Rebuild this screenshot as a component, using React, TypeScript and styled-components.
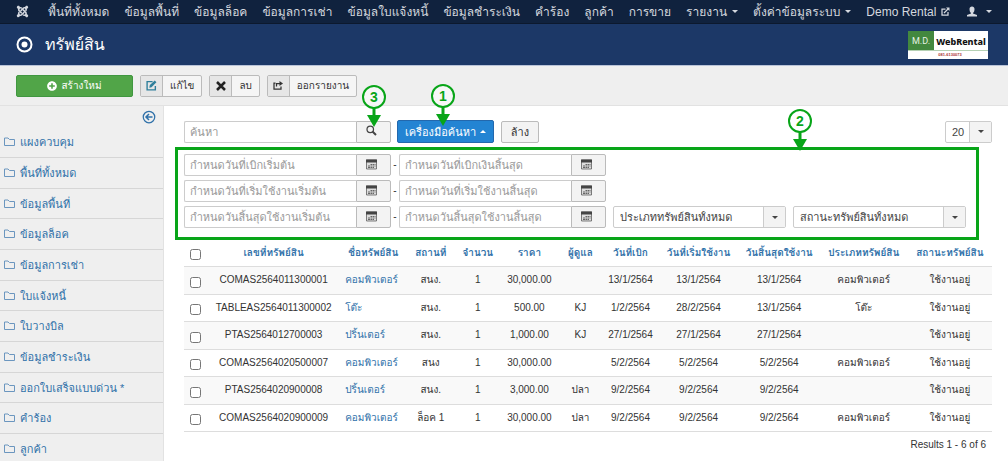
import React from "react";
import styled, { createGlobalStyle } from "styled-components";
import { FaJoomla, FaPlusCircle } from "react-icons/fa";

const GlobalStyle = createGlobalStyle`
  *, *::before, *::after { box-sizing: border-box; }
  body { margin: 0; background: #fff; color: #333; }
  body, button, input, select { font-family: "Liberation Sans", "Loma", "Waree", "Noto Sans Thai", sans-serif; }
  body { font-size: 10px; line-height: 16px; }
  a { color: #3071a9; text-decoration: none; }
  svg { display: block; flex: none; }
`;

const Page = styled.div`
  min-height: 100vh;
  display: flex;
  flex-direction: column;
`;

const NavBar = styled.nav`
  height: 24px;
  padding: 0 16px;
  display: flex;
  align-items: center;
  gap: 15px;
  background: #10223e;
  border-bottom: 1px solid #0c192e;
  font-size: 12px;
  white-space: nowrap;
`;

const NavLogo = styled.span`
  margin-right: 4px;
`;

const NavLink = styled.a<{ $end?: boolean }>`
  display: flex;
  align-items: center;
  gap: ${(p) => (p.$end ? "9px" : "5px")};
  margin-left: ${(p) => (p.$end ? "auto" : "0")};
  color: #d4d8df;
`;

const Caret = styled.span<{ $up?: boolean }>`
  display: block;
  border: 3px solid transparent;
  ${(p) => (p.$up ? "border-bottom-color: currentColor; border-top: 0;" : "border-top-color: currentColor; border-bottom: 0;")}
`;

const TitleBar = styled.header`
  height: 42px;
  padding: 0 20px 0 16px;
  display: flex;
  align-items: center;
  gap: 12px;
  background: #1c3867;
  border-bottom: 1px solid #b9c3d8;
  color: #fff;
`;

const Title = styled.h1`
  margin: 0;
  flex: 1;
  font-size: 16px;
  line-height: 24px;
  font-weight: 400;
`;

const Brand = styled.div`
  width: 80px;
  height: 28px;
  display: grid;
  grid-template: 19px 9px / 26px 54px;
  background: #fff;
`;

const BrandMark = styled.span`
  background: #43883f;
  color: #e6f2e5;
  font: 9px/20px Roboto, sans-serif;
  text-align: center;
`;

const BrandName = styled.span`
  padding-top: 2px;
  color: #111;
  font: 800 9px/17px "Noto Sans", sans-serif;
  text-align: center;
`;

const BrandPhone = styled.span`
  grid-column: 1 / -1;
  border-top: 1px solid #b5d1b4;
  color: #a33;
  font: 700 4px/8px "Liberation Sans", sans-serif;
  text-align: center;
  padding-left: 4px;
`;

const Toolbar = styled.div`
  height: 40px;
  padding: 0 16px;
  display: flex;
  align-items: center;
  gap: 7px;
  background: #efefef;
  border-bottom: 1px solid #e2e2e2;
`;

const CreateButton = styled.button`
  width: 117px;
  height: 22px;
  padding: 0;
  display: flex;
  align-items: center;
  justify-content: center;
  gap: 4px;
  border: 1px solid #409740;
  border-radius: 2px;
  background: #51a548;
  color: #fff;
  font-size: 10px;
`;

const ToolButton = styled.button`
  height: 22px;
  padding: 0;
  display: flex;
  align-items: stretch;
  border: 1px solid #bbb;
  border-radius: 2px;
  background: #f5f5f5;
  color: #333;
  font-size: 10px;
  line-height: 20px;
`;

const ToolIcon = styled.span`
  width: 22px;
  display: flex;
  align-items: center;
  justify-content: center;
  border-right: 1px solid #bbb;
  background: #e6e6e6;
`;

const ToolLabel = styled.span`
  padding: 0 7px;
`;

const Body = styled.div`
  flex: 1;
  display: flex;
  align-items: stretch;
`;

const Sidebar = styled.aside`
  width: 164px;
  flex: none;
  background: #efefef;
  border-right: 1px solid #e2e2e2;
`;

const Collapse = styled.button`
  display: block;
  margin: 4px 7px 0 auto;
  padding: 0;
  border: 0;
  background: none;
  color: #3071a9;
`;

const Menu = styled.ul`
  margin: 3px 0 0;
  padding: 0;
  list-style: none;
`;

const MenuItem = styled.li`
  height: 31px;
  padding: 7px 4px 0;
  border-bottom: 1px solid #d6d6d6;
  font-size: 11px;
  &:nth-child(3n) { height: 30px; }
  &:last-child { height: 26px; border: 0; }
`;

const MenuLink = styled.a`
  display: flex;
  align-items: center;
  gap: 5px;
`;

const Main = styled.main`
  flex: 1;
  min-width: 0;
  padding: 14px 16px 0 20px;
`;

const SearchRow = styled.div`
  display: flex;
  align-items: center;
`;

const InputGroup = styled.div`
  width: 207px;
  height: 22px;
  display: flex;
`;

const TextInput = styled.input`
  flex: 1;
  min-width: 0;
  padding: 0 5px;
  border: 1px solid #ccc;
  border-right: 0;
  border-radius: 2px 0 0 2px;
  font-size: 11px;
  color: #555;
  background: #fff;
  &::placeholder { color: #999; opacity: 1; }
`;

const AddOn = styled.button`
  width: 35px;
  padding: 0 4px 2px 0;
  position: relative;
  display: flex;
  align-items: center;
  justify-content: center;
  border: 1px solid #bbb;
  border-radius: 0 2px 2px 0;
  background: #f3f3f3;
  color: #444;
`;

const SearchTools = styled.button`
  width: 97px;
  height: 23px;
  margin-left: 6px;
  padding: 0;
  position: relative;
  display: flex;
  align-items: center;
  justify-content: center;
  gap: 4px;
  border: 1px solid #2368ad;
  border-radius: 2px;
  background: #2384d3;
  color: #fff;
  font-size: 11px;
`;

const ClearButton = styled.button`
  width: 38px;
  height: 22px;
  margin-left: 7px;
  padding: 0;
  border: 1px solid #bbb;
  border-radius: 2px;
  background: #f3f3f3;
  color: #333;
  font-size: 11px;
`;

const SelectBox = styled.div<{ $width: number; $end?: boolean }>`
  width: ${(p) => p.$width}px;
  height: 22px;
  margin-left: ${(p) => (p.$end ? "auto" : "7px")};
  display: grid;
  grid-template-columns: 1fr 22px;
  border: 1px solid #ccc;
  border-radius: 2px;
  background: #fff;
  color: #444;
`;

const Select = styled.select`
  grid-area: 1 / 1 / 2 / 3;
  min-width: 0;
  padding: 0 22px 0 6px;
  appearance: none;
  border: 0;
  background: none;
  color: inherit;
  font-size: 11px;
`;

const SelectArrow = styled.span`
  grid-area: 1 / 2 / 2 / 3;
  display: flex;
  align-items: center;
  justify-content: center;
  border-left: 1px solid #ccc;
  background: #f3f3f3;
  pointer-events: none;
`;

const FilterPanel = styled.section`
  position: relative;
  margin: 4px 13px 0 -9px;
  padding: 4px 6px 9px;
  display: flex;
  flex-direction: column;
  gap: 4px;
  border: 3px solid #08a518;
`;

const FilterRow = styled.div`
  display: flex;
  align-items: center;
`;

const Dash = styled.span`
  width: 8px;
  text-align: center;
`;

const Pin = styled.span<{ $left: string; $top: number }>`
  position: absolute;
  left: ${(p) => p.$left};
  top: ${(p) => p.$top}px;
  width: 26px;
  height: 44px;
  margin-left: -13px;
  pointer-events: none;
`;

const Table = styled.table`
  width: 100%;
  table-layout: fixed;
  border-collapse: collapse;
  text-align: center;
  white-space: nowrap;
`;

const Col = styled.col<{ $width: number }>`
  width: ${(p) => p.$width}px;
`;

const HeadCell = styled.th`
  height: 26px;
  padding: 0;
  border-bottom: 1px solid #ddd;
  font-size: 10px;
`;

const Row = styled.tr`
  height: 27px;
  &:nth-child(odd) { height: 28px; background: #f9f9f9; }
`;

const Cell = styled.td<{ $left?: boolean }>`
  padding: 0 0 0 ${(p) => (p.$left ? "5px" : "0")};
  border-bottom: 1px solid #ddd;
  text-align: ${(p) => (p.$left ? "left" : "center")};
`;

const Check = styled.input`
  display: block;
  width: 11px;
  height: 11px;
  margin: 4px auto 0;
`;

const Results = styled.p`
  margin: 5px 6px 0;
  text-align: right;
`;

const TargetIcon = () => (
  <svg width="17" height="17" viewBox="0 0 17 17">
    <circle cx="8.500" cy="8.500" r="7" fill="none" stroke="#fff" strokeWidth="2" />
    <circle cx="8.500" cy="8.500" r="3" fill="#fff" />
  </svg>
);

const ExternalIcon = () => (
  <svg width="9" height="9" viewBox="0 0 18 18" fill="none" stroke="currentColor" strokeWidth="2.500">
    <path d="M9 4H2v12h12v-6M6 12l9-9" />
    <path d="M10 1h7v7z" fill="currentColor" stroke="none" />
  </svg>
);

const UserIcon = () => (
  <svg width="10" height="11" viewBox="0 0 20 22" fill="currentColor">
    <path d="M10 1c-3 0-5 2-5 5 0 4 1 6 3 8v1l-8 3v3h20v-3l-8-3v-1c2-2 3-4 3-8 0-3-2-5-5-5z" />
  </svg>
);

const EditIcon = () => (
  <svg width="11" height="11" viewBox="0 0 20 20" fill="none" stroke="#2f7f9b" strokeWidth="2.500">
    <path d="M12 3H2v15h15v-7" />
    <path d="M6 14l1-5 9-8 3 3-9 9z" fill="#2f7f9b" stroke="none" />
  </svg>
);

const CrossIcon = () => (
  <svg width="10" height="10" viewBox="0 0 20 20" stroke="#222" strokeWidth="5">
    <path d="M2 2l16 16M18 2L2 18" />
  </svg>
);

const ShareIcon = () => (
  <svg width="10" height="9" viewBox="0 0 20 18" fill="none" stroke="#333" strokeWidth="2.500">
    <path d="M5 4H2v12h14v-5" />
    <path d="M7 11V5h7" />
    <path d="M13 0l7 5-7 5z" fill="#333" stroke="none" />
  </svg>
);

const BackIcon = () => (
  <svg width="14" height="14" viewBox="0 0 28 28" fill="none" stroke="currentColor" strokeWidth="2.500">
    <circle cx="14" cy="14" r="11.500" />
    <path d="M21 14H8M14 8l-6 6 6 6" strokeWidth="3" />
  </svg>
);

const FolderIcon = () => (
  <svg width="11" height="10" viewBox="0 0 22 20" fill="none" stroke="#6b96bf" strokeWidth="2">
    <path d="M1 17V2h7l3 3h10v12z" />
  </svg>
);

const SearchIcon = () => (
  <svg width="11" height="11" viewBox="0 0 22 22" fill="none" stroke="currentColor">
    <circle cx="8.500" cy="8.500" r="6.500" strokeWidth="2.500" />
    <path d="M13 13l7 7" strokeWidth="4" />
  </svg>
);

const CalendarIcon = () => (
  <svg width="11" height="11" viewBox="0 0 22 22">
    <path d="M1 2h20v18H1z" fill="#ddd" stroke="#555" strokeWidth="1.500" />
    <path d="M0 1h22v6H0z" fill="#444" />
    <path d="M9 10h3v2H9zM13 10h3v2h-3zM17 10h2v2h-2zM4 13h4v2H4zM9 13h3v2H9zM13 13h3v2h-3zM17 13h2v2h-2zM4 16h4v2H4zM9 16h3v2H9zM13 16h3v2h-3z" fill="#666" />
  </svg>
);

const Marker = ({ n, left, top }: { n: number; left: string; top: number }) => (
  <Pin $left={left} $top={top} aria-hidden="true">
    <svg width="26" height="44" viewBox="0 0 26 44">
      <circle cx="13" cy="13" r="11" fill="#fff" fillOpacity="0.500" stroke="#08a518" strokeWidth="2" />
      <path d="M13 24v8" stroke="#08a518" strokeWidth="3" />
      <path d="M6 31h14l-7 12z" fill="#08a518" />
      <text x="13" y="18" textAnchor="middle" fontSize="14" fontWeight="700" fill="#08a518">{n}</text>
    </svg>
  </Pin>
);

const navItems = ["พื้นที่ทั้งหมด", "ข้อมูลพื้นที่", "ข้อมูลล็อค", "ข้อมูลการเช่า", "ข้อมูลใบแจ้งหนี้", "ข้อมูลชำระเงิน", "คำร้อง", "ลูกค้า", "การขาย"];
const menuItems = ["แผงควบคุม", "พื้นที่ทั้งหมด", "ข้อมูลพื้นที่", "ข้อมูลล็อค", "ข้อมูลการเช่า", "ใบแจ้งหนี้", "ใบวางบิล", "ข้อมูลชำระเงิน", "ออกใบเสร็จแบบด่วน *", "คำร้อง", "ลูกค้า"];
const dateFilters = [
  ["กำหนดวันที่เบิกเริ่มต้น", "กำหนดวันที่เบิกเงินสิ้นสุด"],
  ["กำหนดวันที่เริ่มใช้งานเริ่มต้น", "กำหนดวันที่เริ่มใช้งานสิ้นสุด"],
  ["กำหนดวันสิ้นสุดใช้งานเริ่มต้น", "กำหนดวันสิ้นสุดใช้งานสิ้นสุด"],
];
const columnWidths = [23, 133, 66, 49, 45, 58, 44, 56, 80, 81, 88, 84];
const headings = ["เลขที่ทรัพย์สิน", "ชื่อทรัพย์สิน", "สถานที่", "จำนวน", "ราคา", "ผู้ดูแล", "วันที่เบิก", "วันที่เริ่มใช้งาน", "วันสิ้นสุดใช้งาน", "ประเภททรัพย์สิน", "สถานะทรัพย์สิน"];
const assets = [
  ["COMAS2564011300001", "คอมพิวเตอร์", "สนง.", "1", "30,000.00", "", "13/1/2564", "13/1/2564", "13/1/2564", "คอมพิวเตอร์", "ใช้งานอยู่"],
  ["TABLEAS2564011300002", "โต๊ะ", "สนง.", "1", "500.00", "KJ", "1/2/2564", "28/2/2564", "13/1/2564", "โต๊ะ", "ใช้งานอยู่"],
  ["PTAS2564012700003", "ปริ้นเตอร์", "สนง.", "1", "1,000.00", "KJ", "27/1/2564", "27/1/2564", "27/1/2564", "", "ใช้งานอยู่"],
  ["COMAS2564020500007", "คอมพิวเตอร์", "สนง", "1", "30,000.00", "", "5/2/2564", "5/2/2564", "5/2/2564", "คอมพิวเตอร์", "ใช้งานอยู่"],
  ["PTAS2564020900008", "ปริ้นเตอร์", "สนง.", "1", "3,000.00", "ปลา", "9/2/2564", "9/2/2564", "9/2/2564", "", "ใช้งานอยู่"],
  ["COMAS2564020900009", "คอมพิวเตอร์", "ล็อค 1", "1", "30,000.00", "ปลา", "9/2/2564", "9/2/2564", "9/2/2564", "คอมพิวเตอร์", "ใช้งานอยู่"],
];

const DateField = ({ label }: { label: string }) => (
  <InputGroup>
    <TextInput type="text" placeholder={label} aria-label={label} />
    <AddOn type="button" aria-label={label}><CalendarIcon /></AddOn>
  </InputGroup>
);

const DropDown = ({ label, width, end }: { label: string; width: number; end?: boolean }) => (
  <SelectBox $width={width} $end={end}>
    <Select aria-label={label}><option>{label}</option></Select>
    <SelectArrow><Caret /></SelectArrow>
  </SelectBox>
);

export default function App() {
  return (
    <Page>
      <GlobalStyle />
      <NavBar>
        <NavLogo><FaJoomla size={13} color="#d4d8df" /></NavLogo>
        {navItems.map((t) => <NavLink href="#" key={t}>{t}</NavLink>)}
        <NavLink href="#">รายงาน <Caret /></NavLink>
        <NavLink href="#">ตั้งค่าข้อมูลระบบ <Caret /></NavLink>
        <NavLink href="#">Demo Rental <ExternalIcon /></NavLink>
        <NavLink href="#" $end aria-label="User"><UserIcon /><Caret /></NavLink>
      </NavBar>
      <TitleBar>
        <TargetIcon />
        <Title>ทรัพย์สิน</Title>
        <Brand>
          <BrandMark>M.D.</BrandMark>
          <BrandName>WebRental</BrandName>
          <BrandPhone>081-6130073</BrandPhone>
        </Brand>
      </TitleBar>
      <Toolbar>
        <CreateButton type="button"><FaPlusCircle size={10} />สร้างใหม่</CreateButton>
        <ToolButton type="button"><ToolIcon><EditIcon /></ToolIcon><ToolLabel>แก้ไข</ToolLabel></ToolButton>
        <ToolButton type="button"><ToolIcon><CrossIcon /></ToolIcon><ToolLabel>ลบ</ToolLabel></ToolButton>
        <ToolButton type="button"><ToolIcon><ShareIcon /></ToolIcon><ToolLabel>ออกรายงาน</ToolLabel></ToolButton>
      </Toolbar>
      <Body>
        <Sidebar>
          <Collapse type="button" aria-label="Collapse"><BackIcon /></Collapse>
          <Menu>
            {menuItems.map((t) => (
              <MenuItem key={t}><MenuLink href="#"><FolderIcon />{t}</MenuLink></MenuItem>
            ))}
          </Menu>
        </Sidebar>
        <Main>
          <SearchRow>
            <InputGroup>
              <TextInput type="search" placeholder="ค้นหา" aria-label="ค้นหา" />
              <AddOn type="button" aria-label="ค้นหา">
                <SearchIcon />
                <Marker n={3} left="50%" top={-38} />
              </AddOn>
            </InputGroup>
            <SearchTools type="button">
              เครื่องมือค้นหา <Caret $up />
              <Marker n={1} left="47%" top={-38} />
            </SearchTools>
            <ClearButton type="button">ล้าง</ClearButton>
            <DropDown label="20" width={47} end />
          </SearchRow>
          <FilterPanel>
            {dateFilters.map(([from, to], i) => (
              <FilterRow key={from}>
                <DateField label={from} />
                <Dash>-</Dash>
                <DateField label={to} />
                {i === 2 && <DropDown label="ประเภททรัพย์สินทั้งหมด" width={173} />}
                {i === 2 && <DropDown label="สถานะทรัพย์สินทั้งหมด" width={173} />}
              </FilterRow>
            ))}
            <Marker n={2} left="78%" top={-42} />
          </FilterPanel>
          <Table>
            <colgroup>{columnWidths.map((w, i) => <Col key={i} $width={w} />)}</colgroup>
            <thead>
              <tr>
                <HeadCell><Check type="checkbox" aria-label="Select all" /></HeadCell>
                {headings.map((h) => <HeadCell key={h}><a href="#">{h}</a></HeadCell>)}
              </tr>
            </thead>
            <tbody>
              {assets.map((row) => (
                <Row key={row[0]}>
                  <Cell><Check type="checkbox" aria-label={row[0]} /></Cell>
                  {row.map((v, i) => (
                    <Cell key={i} $left={i === 1}>{i === 1 ? <a href="#">{v}</a> : v}</Cell>
                  ))}
                </Row>
              ))}
            </tbody>
          </Table>
          <Results>Results 1 - 6 of 6</Results>
        </Main>
      </Body>
    </Page>
  );
}
